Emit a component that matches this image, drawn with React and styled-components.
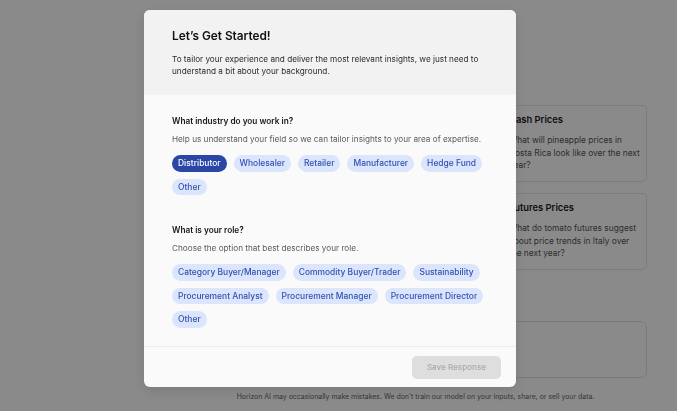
import React, { useState } from "react";
import styled, { createGlobalStyle } from "styled-components";

const Global = createGlobalStyle`
  html, body { margin: 0; padding: 0; }
  body {
    font-family: Inter, "Noto Sans", sans-serif;
    background: #ffffff;
    color: #111;
    -webkit-font-smoothing: antialiased;
  }
  * { box-sizing: border-box; }
`;

const Page = styled.div`
  width: 677px;
  height: 411px;
  display: flex;
  overflow: hidden;
`;

const Sidebar = styled.aside`
  width: 154px;
  flex: none;
  background: #ffffff;
`;

const Main = styled.main`
  flex: 1;
  display: flex;
  flex-direction: column;
  padding: 105px 30px 0 30px;
`;

const CardGrid = styled.div`
  display: grid;
  grid-template-columns: 1fr 149px;
  gap: 11px 8px;
`;

const CardColumn = styled.div`
  grid-column: 2;
  display: flex;
  flex-direction: column;
  gap: 11px;
`;

const Card = styled.div`
  border: 1px solid #e6e6e6;
  border-radius: 5px;
  padding: 8px 5px 10px 10px;
  height: 77px;
`;

const CardTitle = styled.div`
  font-size: 9.4px;
  font-weight: 600;
  color: #1a1a1a;
  line-height: 12px;
  margin-bottom: 8px;
  white-space: nowrap;
`;

const CardText = styled.div`
  font-size: 8.35px;
  line-height: 12.5px;
  color: #555;
`;

const InputBox = styled.div`
  margin-top: 51px;
  height: 57px;
  border: 1px solid #e2e2e2;
  border-radius: 6px;
`;

const Disclaimer = styled.div`
  margin-top: 14px;
  text-align: center;
  font-size: 6.95px;
  line-height: 9px;
  color: #666;
  white-space: nowrap;
`;

const Overlay = styled.div`
  position: fixed;
  inset: 0;
  background: rgba(0, 0, 0, 0.46);
  display: flex;
  align-items: flex-start;
  padding: 10px 0 0 144px;
`;

const Modal = styled.div`
  width: 372px;
  height: 377px;
  background: #fafafa;
  border-radius: 6px;
  overflow: hidden;
  display: flex;
  flex-direction: column;
  box-shadow: 0 4px 14px rgba(0, 0, 0, 0.12);
`;

const Header = styled.header`
  background: #f2f2f2;
  height: 85px;
  flex: none;
  padding: 18px 28px 0 28px;
`;

const Title = styled.h2`
  margin: 0;
  font-size: 11.8px;
  font-weight: 600;
  line-height: 16px;
  color: #111;
`;

const Intro = styled.p`
  margin: 8.75px 0 0 0;
  font-size: 8.2px;
  line-height: 12.5px;
  color: #2b2b2b;
`;

const Body = styled.div`
  flex: 1;
  padding: 19px 28px 0 28px;
  display: flex;
  flex-direction: column;
  gap: 28px;
`;

const Section = styled.section`
  display: flex;
  flex-direction: column;
`;

const Question = styled.h3`
  margin: 0;
  font-size: 8.25px;
  font-weight: 600;
  line-height: 14px;
  color: #161616;
`;

const Hint = styled.p`
  margin: 4px 0 0 0;
  font-size: 8.2px;
  line-height: 14px;
  color: #5a5a5a;
`;

const Chips = styled.div`
  margin-top: 9px;
  display: flex;
  flex-wrap: wrap;
  gap: 7px;
`;

const Chip = styled.button`
  all: unset;
  height: 16.5px;
  padding: 0 6px;
  border-radius: 999px;
  display: inline-flex;
  align-items: center;
  font-family: Inter, sans-serif;
  font-size: 8.45px;
  font-weight: 500;
  cursor: pointer;
  background: ${(p) => (p.$selected ? "#2a47a8" : "#dbe6fd")};
  color: ${(p) => (p.$selected ? "#ffffff" : "#3350b3")};
`;

const Footer = styled.footer`
  height: 41px;
  flex: none;
  border-top: 1px solid #ececec;
  display: flex;
  justify-content: flex-end;
  align-items: center;
  padding: 0 15px 0 28px;
`;

const SaveButton = styled.button`
  all: unset;
  width: 89px;
  height: 23px;
  border-radius: 5px;
  background: #dedede;
  color: #a9a9a9;
  font-family: Inter, sans-serif;
  font-size: 8.1px;
  font-weight: 500;
  display: flex;
  align-items: center;
  justify-content: center;
`;

const industries = ["Distributor", "Wholesaler", "Retailer", "Manufacturer", "Hedge Fund", "Other"];
const roles = [
  "Category Buyer/Manager",
  "Commodity Buyer/Trader",
  "Sustainability",
  "Procurement Analyst",
  "Procurement Manager",
  "Procurement Director",
  "Other",
];

const cards = [
  { title: "Cash Prices", text: "What will pineapple prices in Costa Rica look like over the next year?" },
  { title: "Futures Prices", text: "What do tomato futures suggest about price trends in Italy over the next year?" },
];

export default function App() {
  const [industry, setIndustry] = useState("Distributor");
  const [role, setRole] = useState(null);
  return (
    <>
      <Global />
      <Page>
        <Sidebar />
        <Main>
          <CardGrid>
            <CardColumn>
              {cards.map((c) => (
                <Card key={c.title}>
                  <CardTitle>{c.title}</CardTitle>
                  <CardText>{c.text}</CardText>
                </Card>
              ))}
            </CardColumn>
          </CardGrid>
          <InputBox />
          <Disclaimer>
            Horizon AI may occasionally make mistakes. We don't train our model on your inputs, share, or sell your data.
          </Disclaimer>
        </Main>
      </Page>
      <Overlay>
        <Modal>
          <Header>
            <Title>Let’s Get Started!</Title>
            <Intro>
              To tailor your experience and deliver the most relevant insights, we just need to understand a bit about
              your background.
            </Intro>
          </Header>
          <Body>
            <Section>
              <Question>What industry do you work in?</Question>
              <Hint>Help us understand your field so we can tailor insights to your area of expertise.</Hint>
              <Chips>
                {industries.map((i) => (
                  <Chip key={i} $selected={industry === i} onClick={() => setIndustry(i)}>
                    {i}
                  </Chip>
                ))}
              </Chips>
            </Section>
            <Section>
              <Question>What is your role?</Question>
              <Hint>Choose the option that best describes your role.</Hint>
              <Chips>
                {roles.map((r) => (
                  <Chip key={r} $selected={role === r} onClick={() => setRole(r)}>
                    {r}
                  </Chip>
                ))}
              </Chips>
            </Section>
          </Body>
          <Footer>
            <SaveButton>Save Response</SaveButton>
          </Footer>
        </Modal>
      </Overlay>
    </>
  );
}
